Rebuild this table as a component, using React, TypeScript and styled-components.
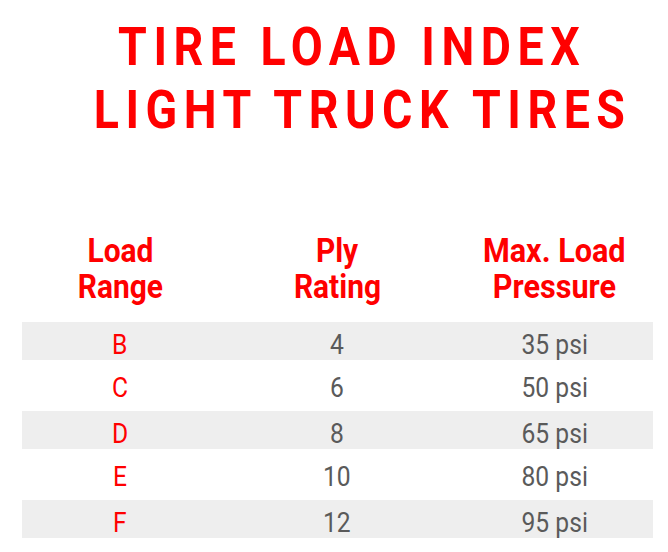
import React from "react";
import styled, { createGlobalStyle } from "styled-components";

const Global = createGlobalStyle`
  html, body { margin: 0; padding: 0; background: #ffffff; }
  body { font-family: Roboto, "Liberation Sans", sans-serif; }
`;

const Page = styled.div`
  width: 668px;
  height: 552px;
  overflow: hidden;
  background: #fff;
  display: flex;
  flex-direction: column;
`;

const Title = styled.h1`
  margin: 15px 0 0;
  padding-left: 36px;
  display: flex;
  flex-direction: column;
  align-items: center;
  font-family: Roboto, sans-serif;
  font-weight: 700;
  font-size: 54px;
  line-height: 63px;
  color: #ff0000;
`;

const Squeeze = styled.span<{ $sx: number }>`
  display: inline-block;
  white-space: nowrap;
  transform: scaleX(${(p) => p.$sx});
  transform-origin: center;
`;

const TitleLine = styled(Squeeze)<{ $shift?: number }>`
  letter-spacing: 7.6px;
  margin-left: ${(p) => p.$shift ?? 0}px;
`;

const Table = styled.div`
  margin: 91px 15px 0 22px;
  display: flex;
  flex-direction: column;
`;

const Grid = styled.div`
  display: grid;
  grid-template-columns: 196px 238px 1fr;
`;

const HeadRow = styled(Grid)`
  margin-bottom: 18px;
`;

const HeadCell = styled.div`
  text-align: center;
  font-weight: 700;
  font-size: 34px;
  line-height: 36px;
  color: #ff0000;
`;

const Row = styled(Grid)<{ $shade: boolean }>`
  height: ${(p) => (p.$shade ? 38 : 51)}px;
  padding-top: ${(p) => (p.$shade ? 8 : 13)}px;
  box-sizing: border-box;
  background: ${(p) => (p.$shade ? "#eeeeee" : "#ffffff")};
`;

const Cell = styled.div<{ $red?: boolean }>`
  text-align: center;
  font-weight: 400;
  font-size: 28px;
  line-height: 30px;
  color: ${(p) => (p.$red ? "#ff0000" : "#5a5a5a")};
`;

const rows = [
  ["B", "4", "35 psi"],
  ["C", "6", "50 psi"],
  ["D", "8", "65 psi"],
  ["E", "10", "80 psi"],
  ["F", "12", "95 psi"],
];

export default function App() {
  return (
    <Page>
      <Global />
      <Title>
        <TitleLine $sx={0.86}>TIRE LOAD INDEX</TitleLine>
        <TitleLine $sx={0.86} $shift={21}>LIGHT TRUCK TIRES</TitleLine>
      </Title>
      <Table>
        <HeadRow>
          <HeadCell>
            <Squeeze $sx={0.88}>Load</Squeeze>
            <br />
            <Squeeze $sx={0.88}>Range</Squeeze>
          </HeadCell>
          <HeadCell>
            <Squeeze $sx={0.88}>Ply</Squeeze>
            <br />
            <Squeeze $sx={0.88}>Rating</Squeeze>
          </HeadCell>
          <HeadCell>
            <Squeeze $sx={0.9}>Max. Load</Squeeze>
            <br />
            <Squeeze $sx={0.9}>Pressure</Squeeze>
          </HeadCell>
        </HeadRow>
        {rows.map((r, i) => (
          <Row key={r[0]} $shade={i % 2 === 0}>
            <Cell $red>
              <Squeeze $sx={0.88}>{r[0]}</Squeeze>
            </Cell>
            <Cell>
              <Squeeze $sx={0.88}>{r[1]}</Squeeze>
            </Cell>
            <Cell>
              <Squeeze $sx={0.88}>{r[2]}</Squeeze>
            </Cell>
          </Row>
        ))}
      </Table>
    </Page>
  );
}
